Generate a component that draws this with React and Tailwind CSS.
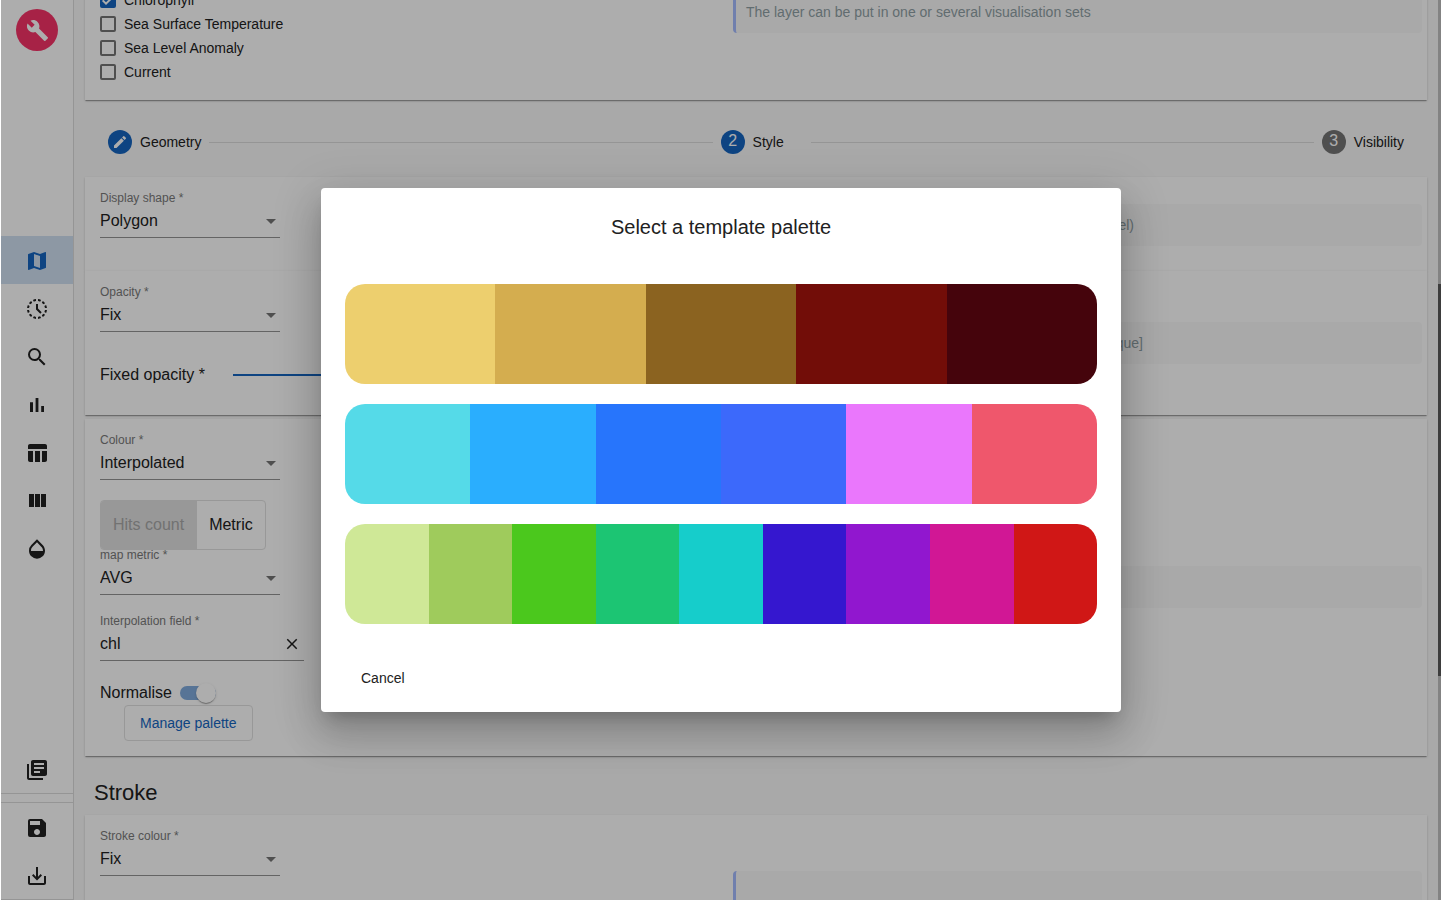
import { useState } from "react";
import {
  MdBuild,
  MdClose,
  MdCreate,
  MdHistoryToggleOff,
  MdLibraryBooks,
  MdMap,
  MdOpacity,
  MdSave,
  MdSaveAlt,
  MdSearch,
  MdTableChart,
} from "react-icons/md";

const PALETTES = [
  ["#edcf6e", "#d4ad4f", "#8b6320", "#720d08", "#45040c"],
  ["#55dae8", "#2aaefe", "#2775fc", "#3c69fb", "#ea77fc", "#ef576c"],
  ["#cfe897", "#9fcb5c", "#4bc81d", "#1cc573", "#16cdcb", "#3517cf", "#9117cf", "#d11795", "#d01716"],
];

function BarsIcon({ size }) {
  return (
    <svg width={size} height={size} viewBox="0 0 24 24" fill="currentColor" aria-hidden="true">
      <path d="M5 9.2h3V19H5zM10.6 5h2.8v14h-2.8zm5.6 8H19v6h-2.8z" />
    </svg>
  );
}

function ColumnsIcon({ size }) {
  return (
    <svg width={size} height={size} viewBox="0 0 24 24" fill="currentColor" aria-hidden="true">
      <path d="M10 18h5V5h-5v13zm-6 0h5V5H4v13zM16 5v13h5V5h-5z" />
    </svg>
  );
}

const MENU = [
  { name: "Map", Icon: MdMap, active: true },
  { name: "Timeline", Icon: MdHistoryToggleOff },
  { name: "Search", Icon: MdSearch },
  { name: "Analytics", Icon: BarsIcon },
  { name: "Result list", Icon: MdTableChart },
  { name: "Side modules", Icon: ColumnsIcon },
  { name: "Look and feel", Icon: MdOpacity },
];

function NavButton({ name, Icon, active }) {
  return (
    <button
      type="button"
      aria-label={name}
      className={
        "flex h-12 w-full shrink-0 items-center justify-center pt-0.5 " +
        (active ? "bg-[#d0e0f2] text-[#1565c0]" : "text-[#212121]")
      }
    >
      <Icon size={24} />
    </button>
  );
}

function Sidebar() {
  return (
    <nav className="flex w-[73px] shrink-0 flex-col border-r border-b border-[#dcdcdc] bg-white">
      <div className="flex h-[236px] shrink-0 justify-center pt-[9px]">
        <span className="flex size-[42px] items-center justify-center rounded-full bg-[#f73368] text-white">
          <MdBuild size={23} />
        </span>
      </div>
      {MENU.map((item) => (
        <NavButton key={item.name} {...item} />
      ))}
      <div className="mt-auto border-b border-[#dcdcdc]">
        <NavButton name="Collections" Icon={MdLibraryBooks} />
      </div>
      <div className="mt-2 border-t border-[#dcdcdc]">
        <NavButton name="Save" Icon={MdSave} />
        <NavButton name="Download" Icon={MdSaveAlt} />
      </div>
    </nav>
  );
}

function Card({ className = "", children }) {
  return (
    <section
      className={
        "grid shrink-0 grid-cols-[633fr_689fr] items-start bg-white pr-[5px] pl-[15px] shadow-[0_2px_1px_-1px_rgba(0,0,0,0.2),0_1px_1px_0_rgba(0,0,0,0.14),0_1px_3px_0_rgba(0,0,0,0.12)] " +
        className
      }
    >
      {children}
    </section>
  );
}

function Hint({ className = "", children }) {
  return (
    <div
      className={
        "min-h-[42px] rounded border-l-3 border-[#a6bbff] bg-[#fafafa] px-2.5 py-3 text-sm leading-[18px] text-[#90a0a5] " +
        className
      }
    >
      {children}
    </div>
  );
}

function SelectField({ id, label, value, className = "" }) {
  return (
    <div className={"flex w-[180px] flex-col " + className}>
      <label htmlFor={id} className="text-xs leading-[14px] text-[#7a7a7a]">
        {label} *
      </label>
      <div className="grid items-center">
        <select
          id={id}
          defaultValue={value}
          className="col-start-1 row-start-1 h-[33px] w-full appearance-none border-b border-[#949494] bg-transparent text-base"
        >
          <option>{value}</option>
        </select>
        <svg
          viewBox="0 0 10 5"
          className="pointer-events-none col-start-1 row-start-1 mr-1 h-[5px] w-2.5 justify-self-end fill-[#757575]"
          aria-hidden="true"
        >
          <path d="M0 0h10L5 5z" />
        </svg>
      </div>
    </div>
  );
}

function CheckRow({ label, checked = false }) {
  return (
    <label className="flex h-6 items-center gap-2 text-sm">
      <span className="grid">
        <input
          type="checkbox"
          defaultChecked={checked}
          className="peer col-start-1 row-start-1 size-4 appearance-none rounded-xs border-2 border-[#757575] checked:border-[#1565c0] checked:bg-[#1565c0]"
        />
        <svg
          viewBox="0 0 24 24"
          className="pointer-events-none invisible col-start-1 row-start-1 size-4 fill-none stroke-white stroke-[3] peer-checked:visible"
          aria-hidden="true"
        >
          <path d="M4 12.5 9 17.5 20 6.5" />
        </svg>
      </span>
      {label}
    </label>
  );
}

function Step({ label, color, children }) {
  return (
    <button type="button" className="flex items-center gap-2 text-sm">
      <span className={"flex size-6 items-center justify-center rounded-full text-base leading-5 text-white " + color}>
        {children}
      </span>
      <span className="min-w-[50px] text-left">{label}</span>
    </button>
  );
}

function Stepper() {
  return (
    <div className="flex h-[77px] shrink-0 items-center gap-2 px-[23px] pt-[7px]">
      <Step label="Geometry" color="bg-[#1565c0]">
        <MdCreate size={16} />
      </Step>
      <span className="h-px flex-1 bg-[#dcdcdc]" />
      <Step label="Style" color="bg-[#1565c0]">
        <span className="pb-0.5">2</span>
      </Step>
      <span className="h-px flex-1 bg-[#dcdcdc]" />
      <Step label="Visibility" color="bg-[#757575]">
        <span className="pb-0.5">3</span>
      </Step>
    </div>
  );
}

function LayerForm() {
  return (
    <main className="flex min-w-0 flex-1 flex-col overflow-hidden bg-[#fafafa] px-[11px]">
      <Card className="-mt-3 pb-4">
        <div>
          <CheckRow label="Chlorophyll" checked />
          <CheckRow label="Sea Surface Temperature" />
          <CheckRow label="Sea Level Anomaly" />
          <CheckRow label="Current" />
        </div>
        <Hint className="mt-[3px]">The layer can be put in one or several visualisation sets</Hint>
      </Card>

      <Stepper />

      <Card className="pt-3.5 pb-[25px]">
        <SelectField id="shape" label="Display shape" value="Polygon" />
        <Hint className="mt-[13px]">
          <p className="w-[388px] text-right whitespace-nowrap">Shape of the displayed data (depends on aggregation level)</p>
        </Hint>
      </Card>
      <Card className="pt-3.5 pb-7">
        <div>
          <SelectField id="opacity" label="Opacity" value="Fix" />
          <div className="mt-[31px] flex items-center gap-7">
            <label htmlFor="fixed-opacity">Fixed opacity *</label>
            <input
              id="fixed-opacity"
              type="range"
              defaultValue="100"
              className="h-0.5 w-60 appearance-none bg-[#1565c0]"
            />
          </div>
        </div>
        <Hint className="mt-[37px]">
          <p className="w-[397px] text-right whitespace-nowrap">Layer opacity, between 0 [transparent] and 1 [opaque]</p>
        </Hint>
      </Card>

      <Card className="mt-1 pt-3.5 pb-[15px]">
        <div className="flex flex-col items-start">
          <SelectField id="colour" label="Colour" value="Interpolated" />
          <div className="mt-5 flex h-[50px] overflow-hidden rounded border border-[#e0e0e0]">
            <button type="button" disabled className="bg-[#e0e0e0] px-3 text-[#a8a8a8]">
              Hits count
            </button>
            <button type="button" className="border-l border-[#e0e0e0] px-3">
              Metric
            </button>
          </div>
          <SelectField id="metric" label="map metric" value="AVG" className="-mt-0.5" />
          <div className="mt-[19px] flex w-[204px] flex-col">
            <label htmlFor="field" className="text-xs leading-[14px] text-[#7a7a7a]">
              Interpolation field *
            </label>
            <div className="flex h-[33px] items-center border-b border-[#949494] pr-[3px]">
              <input id="field" defaultValue="chl" className="min-w-0 flex-1 bg-transparent text-base" />
              <button type="button" aria-label="Clear">
                <MdClose size={18} />
              </button>
            </div>
          </div>
          <label className="mt-[19px] flex h-[25px] items-center gap-2">
            Normalise
            <span className="flex h-3.5 w-9 items-center justify-end rounded-full bg-[#81acdd]">
              <input
                type="checkbox"
                role="switch"
                defaultChecked
                className="size-5 appearance-none rounded-full bg-white shadow-[0_2px_1px_-1px_rgba(0,0,0,0.2),0_1px_1px_0_rgba(0,0,0,0.14),0_1px_3px_0_rgba(0,0,0,0.12)]"
              />
            </span>
          </label>
          <button type="button" className="ml-6 h-9 rounded border border-[#e0e0e0] px-[15px] text-sm text-[#1565c0]">
            Manage palette
          </button>
        </div>
        <Hint className="mt-[133px]" />
      </Card>

      <h2 className="pt-[22px] pb-2 pl-[9px] text-[22px] leading-[29px]">Stroke</h2>

      <Card className="pt-3.5 pb-20">
        <SelectField id="stroke" label="Stroke colour" value="Fix" />
        <Hint className="mt-[42px]" />
      </Card>
    </main>
  );
}

function PaletteDialog({ onClose }) {
  return (
    <div className="absolute inset-y-0 right-0 left-px flex items-center justify-center bg-black/32">
      <div
        role="dialog"
        aria-modal="true"
        aria-labelledby="dialog-title"
        className="flex w-[800px] max-w-[80vw] flex-col rounded bg-white px-6 pt-6 pb-4 shadow-[0_11px_15px_-7px_rgba(0,0,0,0.2),0_24px_38px_3px_rgba(0,0,0,0.14),0_9px_46px_8px_rgba(0,0,0,0.12)]"
      >
        <h1 id="dialog-title" className="text-center text-xl leading-[30px]">
          Select a template palette
        </h1>
        <div className="mt-[42px] flex flex-col gap-5">
          {PALETTES.map((colors, i) => (
            <button
              key={i}
              type="button"
              aria-label={"Palette " + (i + 1)}
              className="flex h-[100px] w-full overflow-hidden rounded-[20px]"
            >
              {colors.map((color) => (
                <span key={color} className="h-full flex-1" style={{ backgroundColor: color }} />
              ))}
            </button>
          ))}
        </div>
        <button type="button" onClick={onClose} className="mt-9 h-9 self-start rounded px-4 text-sm">
          Cancel
        </button>
      </div>
    </div>
  );
}

export default function App() {
  const [open, setOpen] = useState(true);
  return (
    <div className="relative flex h-screen overflow-hidden bg-white pl-px font-['Liberation_Sans',Arial,sans-serif] text-[#212121]">
      <Sidebar />
      <LayerForm />
      <div className="flex w-[3px] shrink-0 flex-col bg-[#c1c1c1] pt-[284px]">
        <div className="h-[392px] bg-[#5a5a5a]" />
      </div>
      {open && <PaletteDialog onClose={() => setOpen(false)} />}
    </div>
  );
}
